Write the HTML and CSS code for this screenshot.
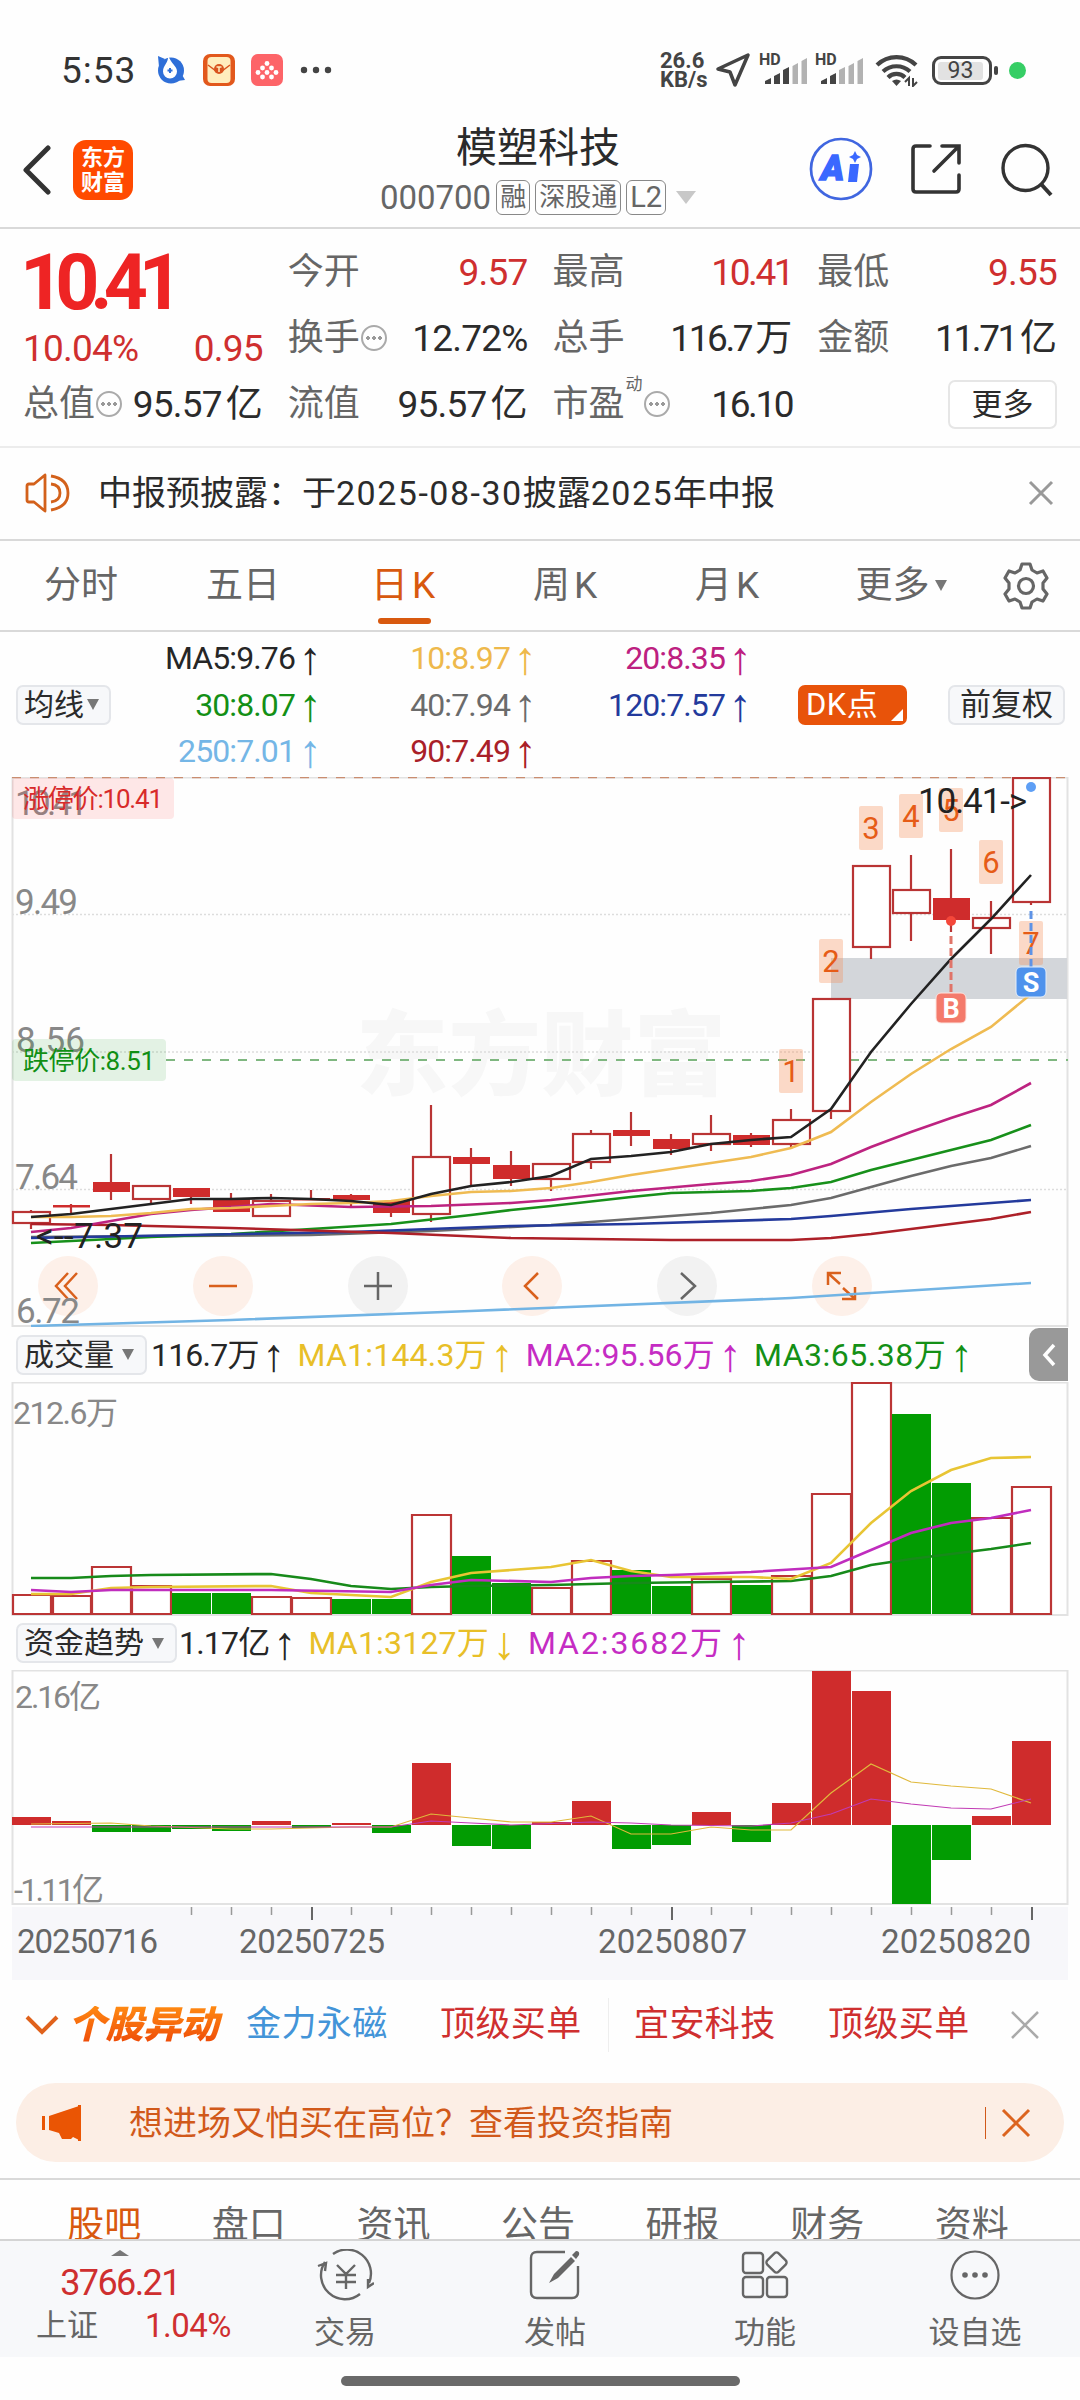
FILE: index.html
```html
<!DOCTYPE html>
<html lang="zh-CN">
<head>
    <meta charset="UTF-8">
    <meta name="viewport" content="width=device-width, initial-scale=1.0">
    <title>模塑科技 000700</title>
    <link rel="stylesheet" href="styles.css">
</head>
<body>
    <div class="status-bar">
        <div class="status-left">
            <span class="clock">5:53</span>
            <svg class="app-drop" width="30" height="30" viewBox="0 0 30 30"><circle cx="15" cy="15.500" r="13" fill="#2f6fd8"/><path d="M2 1 9 4 3 12Z" fill="#2f6fd8"/><path d="M25 18 29 25 21 26Z" fill="#2f6fd8"/><path d="M12 0C13 8 7 10 7 16.500a7 7 0 0 0 14 0C21 11 15 9 12 0Z" fill="#fff"/><path d="M14 13v5M11.500 15.500h5" stroke="#2f6fd8" stroke-width="2"/></svg>
            <svg class="app-mail" width="32" height="32" viewBox="0 0 32 32"><rect width="32" height="32" rx="7" fill="#e2581c"/><rect x="4.500" y="3" width="23" height="26" rx="4" fill="#ffedbd"/><path d="M5 11l8 6h6l8-6" fill="none" stroke="#d9541e" stroke-width="1.500"/><circle cx="16" cy="15" r="5" fill="#d9541e"/><path d="M13.500 13h5M16 13v5" stroke="#ffedbd" stroke-width="1.500"/></svg>
            <svg class="app-dots" width="32" height="32" viewBox="0 0 32 32"><rect width="32" height="32" rx="7" fill="#fd6468"/><g fill="#fff"><circle cx="16" cy="9.500" r="2.400"/><circle cx="11.500" cy="14" r="2.400"/><circle cx="20.500" cy="14" r="2.400"/><circle cx="7" cy="18.500" r="2.400"/><circle cx="16" cy="18.500" r="2.400"/><circle cx="25" cy="18.500" r="2.400"/><circle cx="11.500" cy="23" r="2.400"/><circle cx="20.500" cy="23" r="2.400"/></g></svg>
            <svg width="32" height="8" viewBox="0 0 32 8" fill="#444"><circle cx="4" cy="4" r="3.200"/><circle cx="16" cy="4" r="3.200"/><circle cx="28" cy="4" r="3.200"/></svg>
        </div>
        <div class="status-right">
            <div class="net-speed"><span>26.6</span><span>KB/s</span></div>
            <svg class="nav-arrow" width="36" height="36" viewBox="0 0 36 36"><path d="M33 3 20 33 15 20 3 17Z" fill="none" stroke="#444" stroke-width="3.500" stroke-linejoin="round"/></svg>
            <div class="signal"><span>HD</span><svg width="42" height="28" viewBox="0 0 42 28"><path d="M0 27v-3l6-3v6zM9 27v-8l6-3v11zM18 27V13l6-3v17z" fill="#444"/><path d="M27.500 27V9l5.500-3v21zM36.500 27V4l5.500-3v26z" fill="#b2b2b2"/></svg></div>
            <div class="signal"><span>HD</span><svg width="42" height="28" viewBox="0 0 42 28"><path d="M0 27v-3l6-3v6zM9 27v-8l6-3v11z" fill="#444"/><path d="M18 27V13l6-3v17zM27.500 27V9l5.500-3v21zM36.500 27V4l5.500-3v26z" fill="#b2b2b2"/></svg></div>
            <svg class="wifi" width="44" height="34" viewBox="0 0 44 34"><path d="M2 12a28 28 0 0 1 39 0M8 18.500a20 20 0 0 1 27 0M13 24.500a12 12 0 0 1 17 0" fill="none" stroke="#444" stroke-width="4.200"/><path d="M17 28q4.500-3 9 0l-4.500 5z" fill="#444"/><path d="M34 33v-8l-4 4M38 25v8l4-4" fill="none" stroke="#444" stroke-width="2"/></svg>
            <div class="battery"><span>93</span></div>
            <i class="privacy-dot"></i>
        </div>
    </div>

    <header class="top-bar">
        <svg class="back" width="28" height="50" viewBox="0 0 28 50"><path d="M25 3 3 25l22 22" fill="none" stroke="#333" stroke-width="5" stroke-linecap="round" stroke-linejoin="round"/></svg>
        <div class="brand"><span>东方</span><span>财富</span></div>
        <div class="stock-title">
            <h1>模塑科技</h1>
            <div class="stock-sub"><span class="code">000700</span><b>融</b><b>深股通</b><b class="l2">L2</b><i></i></div>
        </div>
        <svg class="ai" width="64" height="64" viewBox="0 0 64 64"><circle cx="32" cy="32" r="30" fill="none" stroke="#4066e0" stroke-width="2.700"/><text x="12" y="43" class="ai-a">A</text><path d="M41 27h9l-2 18h-9z" fill="#3a68ff"/><path d="M46 14l2 4 4 2-4 2-2 4-2-4-4-2 4-2z" fill="#3a68ff"/></svg>
        <svg class="share" width="52" height="52" viewBox="0 0 52 52"><path d="M20 3H6q-3 0-3 3v40q0 3 3 3h40q3 0 3-3V32M32 3h17v17M48 4 24 28" fill="none" stroke="#333" stroke-width="3.600" stroke-linecap="round"/></svg>
        <svg class="search" width="54" height="54" viewBox="0 0 54 54"><circle cx="25.500" cy="25" r="22.500" fill="none" stroke="#333" stroke-width="3.400"/><path d="M41 41l10 11" stroke="#333" stroke-width="4"/></svg>
    </header>

    <section class="quote">
        <div class="price-box">
            <div class="price">10.41</div>
            <div class="change"><span>10.04%</span><span>0.95</span></div>
        </div>
        <div class="cell"><label>今开</label><span class="up">9.57</span></div>
        <div class="cell"><label>最高</label><span class="up tight">10.41</span></div>
        <div class="cell"><label>最低</label><span class="up">9.55</span></div>
        <div class="cell"><label>换手</label><i class="info"></i><span>12.72%</span></div>
        <div class="cell"><label>总手</label><span class="tight">116.7<em>万</em></span></div>
        <div class="cell"><label>金额</label><span class="tight">11.71<em>亿</em></span></div>
        <div class="cell"><label>总值</label><i class="info"></i><span>95.57<em>亿</em></span></div>
        <div class="cell"><label>流值</label><span>95.57<em>亿</em></span></div>
        <div class="cell"><label>市盈<sup>动</sup></label><i class="info"></i><span class="tight">16.10</span></div>
        <div class="cell end"><button class="more">更多</button></div>
    </section>

    <section class="notice">
        <svg width="46" height="40" viewBox="0 0 46 40" fill="none" stroke="#d3611b" stroke-width="2.800"><path d="M20 2 9 11H4q-2 0-2 2v14q0 2 2 2h5l11 9zM26 3q17 3 17 17T26 37M26 11q9 1 9 9t-9 9" stroke-linejoin="round"/></svg>
        <p>中报预披露：于<span>2025-08-30</span>披露<span>2025</span>年中报</p>
        <svg class="x" width="26" height="26" viewBox="0 0 26 26"><path d="M2 2l22 22M24 2 2 24" stroke="#999" stroke-width="3"/></svg>
    </section>

    <nav class="period-tabs">
        <span>分时</span><span>五日</span><span class="active k">日K</span><span class="k">周K</span><span class="k">月K</span>
        <span class="tab-more">更多<i class="caret"></i></span>
        <svg class="gear" width="48" height="48" viewBox="0 0 48 48" fill="none" stroke="#666" stroke-width="3.200" stroke-linejoin="round"><path d="M20 2h8l2 6 5 3 6-2 4 7-4 5v6l4 5-4 7-6-2-5 3-2 6h-8l-2-6-5-3-6 2-4-7 4-5v-6l-4-5 4-7 6 2 5-3z"/><circle cx="24" cy="24" r="7.500"/></svg>
    </nav>

    <section class="ma-bar">
        <button class="chip">均线<i class="caret"></i></button>
        <div class="ma-grid">
            <span class="c-black">MA5:9.76<u>↑</u></span><span class="c-gold">10:8.97<u>↑</u></span><span class="c-plum">20:8.35<u>↑</u></span>
            <span class="c-green">30:8.07<u>↑</u></span><span class="c-gray">40:7.94<u>↑</u></span><span class="c-blue">120:7.57<u>↑</u></span>
            <span class="c-sky">250:7.01<u>↑</u></span><span class="c-wine">90:7.49<u>↑</u></span>
        </div>
        <button class="chip dk">DK点<i></i></button>
        <button class="chip adj">前复权</button>
    </section>

    <svg class="chart" width="1080" height="550" viewBox="0 777 1080 550">
        <text x="356" y="1088" class="watermark" textLength="370">东方财富</text>
        <g class="grid"><path d="M12 914.500H1068M12 1052H1068M12 1189.500H1068"/></g>
        <path class="frame" d="M12.500 777.500H1067.500V1326H12.500Z"/>
        <path d="M12 777.500H1068" stroke="#c98d70" stroke-width="1.500" stroke-dasharray="9 9"/>
        <rect x="831" y="958" width="236" height="41" fill="#d3d6da"/>
        <path d="M166 1060H1068" stroke="#7fb780" stroke-width="2" stroke-dasharray="9 9"/>

        <!-- price scale -->
        <g class="scale">
            <text x="15" y="815" textLength="73">10.41</text>
            <text x="15" y="914" textLength="63">9.49</text>
            <text x="16" y="1052" textLength="69">8.56</text>
            <text x="15" y="1189" textLength="63">7.64</text>
        </g>

        <!-- round tool buttons -->
        <g fill="#fdf0e9"><circle cx="68" cy="1286" r="30"/><circle cx="223" cy="1286" r="30"/><circle cx="532" cy="1286" r="30"/><circle cx="842" cy="1286" r="30"/></g>
        <g fill="#f2f2f2"><circle cx="378" cy="1286" r="30"/><circle cx="687" cy="1286" r="30"/></g>
        <g fill="none" stroke="#d9601c" stroke-width="2.500">
            <path d="M68 1273l-12 13 12 13M77 1273l-12 13 12 13M209 1286h28M538 1273l-13 13 13 13"/>
            <path d="M828 1285v-12h13M829 1274l11 10M855 1287v12h-13M854 1298l-11-10"/>
        </g>
        <path d="M364 1286h28M378 1272v28M681 1273l14 13-14 13" fill="none" stroke="#666" stroke-width="2.500"/>
        <g class="scale"><text x="16" y="1323" textLength="64">6.72</text></g>

        <!-- candles -->
        <g class="wick">
            <path d="M31 1210v2M31 1223v6M71 1204v9M111 1154v46M151 1199v4M191 1188v16M231 1193v10M271 1194v7M311 1190v9M351 1194v12M391 1200v17M431 1105v52M431 1214v8M471 1148v37M511 1151v35M551 1179v12M591 1130v4M591 1162v7M631 1112v34M671 1134v21M711 1115v19M711 1144v7M751 1133v14M791 1109v10M791 1144v5M831 1111v8M871 947v12M911 855v35M911 913v28M951 849v83M991 901v17M991 928v26M1031 902v3"/>
        </g>
        <g class="up-body">
            <rect x="13" y="1212" width="37" height="11"/><rect x="133" y="1186" width="37" height="13"/><rect x="253" y="1201" width="37" height="15"/><rect x="413" y="1157" width="37" height="57"/><rect x="533" y="1164" width="37" height="15"/><rect x="573" y="1134" width="37" height="28"/><rect x="693" y="1134" width="37" height="10"/><rect x="773" y="1120" width="37" height="24"/><rect x="813" y="999" width="37" height="112"/><rect x="853" y="866" width="37" height="81"/><rect x="893" y="890" width="37" height="23"/><rect x="973" y="918" width="37" height="10"/><rect x="1013" y="778" width="37" height="124"/>
        </g>
        <g class="down-body">
            <rect x="53" y="1205" width="37" height="2.500"/><rect x="93" y="1182" width="37" height="10"/><rect x="173" y="1188" width="37" height="9"/><rect x="213" y="1198" width="37" height="14"/><rect x="293" y="1198" width="37" height="2.500"/><rect x="333" y="1195" width="37" height="5"/><rect x="373" y="1201" width="37" height="12"/><rect x="453" y="1157" width="37" height="7"/><rect x="493" y="1165" width="37" height="14"/><rect x="613" y="1130" width="37" height="6"/><rect x="653" y="1139" width="37" height="10"/><rect x="733" y="1135" width="37" height="10"/><rect x="933" y="898" width="37" height="22"/>
        </g>

        <!-- moving averages -->
        <g class="lines">
            <polyline stroke="#6b6b6b" points="31,1237 311,1235 431,1231 551,1225 631,1219 711,1213 791,1205 831,1198 871,1187 911,1176 951,1166 991,1158 1031,1146"/>
            <polyline stroke="#17901a" points="31,1243 151,1237 231,1234 311,1229 391,1224 471,1215 511,1210 551,1206 631,1197 671,1193 751,1191 791,1188 831,1182 871,1170 911,1160 951,1150 991,1140 1031,1125"/>
            <polyline stroke="#243a9c" points="31,1238 191,1235 351,1232 511,1226 631,1224 791,1219 831,1216 911,1209 1031,1200"/>
            <polyline stroke="#ad2028" points="31,1224 111,1225 231,1228 391,1233 511,1238 671,1240 791,1240 831,1238 871,1234 911,1229 991,1219 1031,1212"/>
            <polyline stroke="#72b4e4" points="31,1326 231,1320 471,1311 791,1298 1031,1283"/>
            <polyline stroke="#bd2380" points="31,1232 71,1228 151,1214 191,1210 271,1204 351,1207 431,1206 511,1203 551,1200 631,1191 711,1184 751,1181 791,1175 831,1164 871,1147 911,1132 951,1118 991,1105 1031,1083"/>
            <polyline stroke="#efbb52" points="31,1217 71,1217 111,1216 151,1213 191,1209 231,1208 271,1206 311,1204 351,1203 391,1201 431,1196 471,1192 511,1191 551,1188 591,1182 631,1175 671,1169 711,1163 751,1157 791,1148 831,1132 871,1102 911,1074 951,1049 991,1027 1031,994"/>
            <polyline stroke="#222" points="31,1217 71,1214 111,1209 151,1204 191,1199 231,1199 271,1198 311,1199 351,1201 391,1205 431,1194 471,1186 511,1182 551,1176 591,1159 631,1156 671,1152 711,1144 751,1140 791,1137 831,1109 871,1052 911,1004 951,959 991,919 1031,875"/>
        </g>

        <!-- nine-turn counters -->
        <g fill="#f58b53" fill-opacity=".32"><rect x="779" y="1049" width="24" height="44" rx="2"/><rect x="819" y="939" width="24" height="44" rx="2"/><rect x="859" y="806" width="24" height="44" rx="2"/><rect x="899" y="794" width="24" height="44" rx="2"/><rect x="939" y="788" width="24" height="44" rx="2"/><rect x="979" y="840" width="24" height="44" rx="2"/><rect x="1019" y="921" width="24" height="44" rx="2"/></g>
        <g class="counter"><text x="791" y="1082">1</text><text x="831" y="972">2</text><text x="871" y="839">3</text><text x="911" y="827">4</text><text x="951" y="821">5</text><text x="991" y="873">6</text><text x="1031" y="954">7</text></g>

        <!-- trade marks -->
        <circle cx="951" cy="921" r="5" fill="#f4473a"/>
        <path d="M951 936v58" stroke="#e07468" stroke-width="3" stroke-dasharray="8 4"/>
        <path d="M1031 911v57" stroke="#5e93e6" stroke-width="3" stroke-dasharray="8 4"/>
        <circle cx="1031" cy="787" r="5" fill="#5e9ff5"/>
        <rect x="936" y="993" width="30" height="30" rx="5" fill="#f47a6b" stroke="#fde3de"/>
        <rect x="1016" y="967" width="30" height="30" rx="5" fill="#4e92ec" stroke="#e3eefc"/>
        <g class="mark"><text x="951" y="1018">B</text><text x="1031" y="992">S</text></g>
        <text x="918" y="813" class="peak" textLength="109">10.41-&gt;</text>
        <text x="36" y="1248" class="peak" textLength="107">&lt;--7.37</text>

        <rect x="12" y="778" width="162" height="41" rx="4" fill="#ff4d4d" fill-opacity=".13"/>
        <text x="23" y="808" class="limit" fill="#d82a2a" textLength="140">涨停价:10.41</text>
        <rect x="12" y="1039" width="154" height="42" rx="4" fill="#1d9c2a" fill-opacity=".12"/>
        <text x="23" y="1070" class="limit" fill="#108f14" textLength="132">跌停价:8.51</text>
    </svg>

    <div class="ind-bar volume-bar">
        <button class="chip">成交量<i class="caret"></i></button>
        <span class="c-black">116.7万<u>↑</u></span><span class="c-yellow">MA1:144.3万<u>↑</u></span><span class="c-magenta">MA2:95.56万<u>↑</u></span><span class="c-green">MA3:65.38万<u>↑</u></span>
        <div class="drawer"><svg width="14" height="24" viewBox="0 0 14 24"><path d="M12 2 3 12l9 10" fill="none" stroke="#fff" stroke-width="3.500"/></svg></div>
    </div>
    <svg class="chart" width="1080" height="234" viewBox="0 1382 1080 234">
        <path class="frame" d="M12.500 1382.500H1067.500V1615H12.500Z"/>
        <g class="up-vol">
            <path d="M13 1595h38v19h-38zM53 1596h38v18h-38zM92 1567h39v47h-39zM132 1586h39v28h-39zM252 1597h39v17h-39zM292 1598h39v16h-39zM412 1515h39v99h-39zM532 1588h39v26h-39zM572 1561h39v53h-39zM692 1579h39v35h-39zM772 1576h39v38h-39zM812 1494h39v120h-39zM852 1383h39v231h-39zM972 1518h39v96h-39zM1012 1487h39v127h-39z"/>
        </g>
        <g class="down-vol">
            <path d="M172 1593h39v21h-39zM212 1593h39v21h-39zM332 1599h39v15h-39zM372 1599h39v15h-39zM452 1556h39v58h-39zM492 1583h39v31h-39zM612 1570h39v44h-39zM652 1586h39v28h-39zM732 1585h39v29h-39zM892 1414h39v200h-39zM932 1483h39v131h-39z"/>
        </g>
        <g class="lines">
            <polyline stroke="#178a1a" points="31,1578 71,1578 111,1576 151,1575 271,1574 311,1579 351,1586 391,1589 431,1587 471,1586 551,1585 631,1583 711,1582 791,1581 831,1576 871,1565 911,1559 951,1554 991,1549 1031,1543"/>
            <polyline stroke="#e8c534" points="31,1594 71,1594 111,1588 151,1587 271,1586 311,1593 351,1595 391,1597 431,1582 471,1573 511,1570 551,1567 591,1560 631,1571 671,1577 751,1577 791,1579 831,1563 871,1523 911,1491 951,1470 991,1458 1031,1457"/>
            <polyline stroke="#c02dbe" points="31,1590 71,1592 111,1590 271,1590 391,1592 431,1585 471,1580 551,1582 591,1578 631,1576 671,1575 751,1572 831,1567 871,1550 911,1533 951,1523 991,1518 1031,1510"/>
        </g>
        <text x="13" y="1424" class="axis-text" textLength="105">212.6万</text>
    </svg>

    <div class="ind-bar fund-bar">
        <button class="chip">资金趋势<i class="caret"></i></button>
        <span class="c-black">1.17亿<u>↑</u></span><span class="c-yellow">MA1:3127万<u>↓</u></span><span class="c-magenta">MA2:3682万<u>↑</u></span>
    </div>
    <svg class="chart" width="1080" height="310" viewBox="0 1670 1080 310">
        <rect x="12" y="1907" width="1056" height="73" fill="#f7f7fa"/>
        <path class="frame" d="M12.500 1670.500H1067.500V1904H12.500Z"/>
        <path fill="#cf2c2c" d="M12 1817h39v8h-39zM52 1821h39v4h-39zM252 1821h39v4h-39zM332 1823h39v2h-39zM412 1763h39v62h-39zM532 1822h39v3h-39zM572 1801h39v24h-39zM692 1812h39v13h-39zM772 1803h39v22h-39zM812 1671h39v154h-39zM852 1691h39v134h-39zM972 1816h39v9h-39zM1012 1741h39v84h-39z"/>
        <path fill="#029c02" d="M92 1825h39v7h-39zM132 1825h39v7h-39zM172 1825h39v4h-39zM212 1825h39v6h-39zM292 1825h39v3h-39zM372 1825h39v8h-39zM452 1825h39v21h-39zM492 1825h39v24h-39zM612 1825h39v24h-39zM652 1825h39v20h-39zM732 1825h39v17h-39zM892 1825h39v79h-39zM932 1825h39v35h-39z"/>
        <g class="lines thin">
            <polyline stroke="#e0b93c" points="31,1824 111,1823 151,1826 231,1829 271,1829 351,1827 391,1827 431,1814 471,1818 511,1822 551,1822 591,1816 631,1834 671,1834 711,1827 751,1830 791,1830 831,1793 871,1764 911,1782 951,1786 991,1789 1031,1803"/>
            <polyline stroke="#c13bb4" points="31,1827 391,1827 431,1821 471,1823 511,1825 591,1822 631,1823 671,1825 751,1826 791,1823 831,1814 871,1799 911,1804 951,1808 991,1809 1031,1799"/>
        </g>
        <text x="15" y="1708" class="axis-text" textLength="86">2.16亿</text>
        <text x="14" y="1901" class="axis-text" textLength="90">-1.11亿</text>
        <path stroke="#999" stroke-width="1.500" d="M191.500 1907v8M231.500 1907v8M271.500 1907v8M351.500 1907v8M391.500 1907v8M431.500 1907v8M471.500 1907v8M511.500 1907v8M551.500 1907v8M591.500 1907v8M631.500 1907v8M711.500 1907v8M751.500 1907v8M791.500 1907v8M831.500 1907v8M871.500 1907v8M911.500 1907v8M951.500 1907v8M991.500 1907v8"/>
        <path stroke="#666" stroke-width="2" d="M312 1907v13M672 1907v13M1032 1907v13"/>
        <g class="date"><text x="17" y="1953" textLength="141">20250716</text><text x="239" y="1953" textLength="146">20250725</text><text x="598" y="1953" textLength="149">20250807</text><text x="881" y="1953" textLength="150">20250820</text></g>
    </svg>

    <section class="movers">
        <svg width="34" height="22" viewBox="0 0 34 22"><path d="M2 3l15 15L32 3" fill="none" stroke="#e0621c" stroke-width="4"/></svg>
        <strong>个股异动</strong>
        <span class="m-blue">金力永磁</span><span>顶级买单</span><i class="divider"></i><span>宜安科技</span><span>顶级买单</span>
        <svg class="x" width="30" height="30" viewBox="0 0 30 30"><path d="M2 2l26 26M28 2 2 28" stroke="#aaa" stroke-width="2.500"/></svg>
    </section>

    <section class="promo">
        <svg width="42" height="36" viewBox="0 0 42 36" fill="#ea5504"><path d="M1 11h3v14H1zM8 11 38 1v34l-6-3-2 2h-9l-3-6-10-3z"/><path d="M37 0h3v36h-3z"/></svg>
        <p>想进场又怕买在高位？查看投资指南</p>
        <i></i>
        <svg width="32" height="30" viewBox="0 0 32 30"><path d="M3 2l26 26M29 2 3 28" stroke="#dc641f" stroke-width="3"/></svg>
    </section>

    <nav class="info-tabs">
        <span class="active">股吧</span><span>盘口</span><span>资讯</span><span>公告</span><span>研报</span><span>财务</span><span>资料</span>
    </nav>

    <footer class="bottom-nav">
        <div class="index">
            <i></i>
            <b>3766.21</b>
            <div><span>上证</span><em>1.04%</em></div>
        </div>
        <div class="item">
            <svg width="58" height="52" viewBox="0 0 58 52" fill="none" stroke="#666" stroke-width="2.400"><path d="M17 5A24 24 0 0 1 53 34M44 45A24 24 0 0 1 9 13M2 17l8-3-1 8M52 30v8l6-4M21 16l9 9 9-9M30 25v15M20 26h20M20 33h20"/></svg>
            <span>交易</span>
        </div>
        <div class="item">
            <svg width="52" height="52" viewBox="0 0 52 52" fill="none" stroke="#666" stroke-width="2.400"><path d="M36 3H8q-6 0-6 6v34q0 6 6 6h35q6 0 6-6V17"/><path d="M20 34l5-9 17-17 4 4-17 17zM43 6l4-4q4 0 3 4l-3 4z" fill="#666" stroke="none"/></svg>
            <span>发帖</span>
        </div>
        <div class="item">
            <svg width="48" height="52" viewBox="0 0 48 52" fill="none" stroke="#666" stroke-width="2.400"><rect x="2" y="4" width="20" height="20" rx="3"/><rect x="2" y="28" width="20" height="20" rx="3"/><rect x="26" y="28" width="20" height="20" rx="3"/><rect x="27.500" y="5.500" width="16" height="16" rx="3" transform="rotate(45 35.500 13.500)"/></svg>
            <span>功能</span>
        </div>
        <div class="item">
            <svg width="52" height="52" viewBox="0 0 52 52"><circle cx="26" cy="26" r="23.500" fill="none" stroke="#666" stroke-width="2.200"/><g fill="#666"><circle cx="16" cy="26" r="2.800"/><circle cx="26" cy="26" r="2.800"/><circle cx="36" cy="26" r="2.800"/></g></svg>
            <span>设自选</span>
        </div>
    </footer>
    <div class="home-bar"></div>
</body>
</html>
```
FILE: styles.css
```css
:root {
    --red: #cf2f2f;
    --orange: #d8590f;
    --text: #2b2b2b;
    --muted: #666;
    --line: #d9d9d9;
    --chip-bg: #f7f8fa;
}
* {
    box-sizing: border-box;
}
body {
    margin: 0;
    width: 1080px;
    height: 2400px;
    overflow: hidden;
    background: #fefefe;
    color: var(--text);
    font-family: Roboto, "Noto Sans CJK SC", sans-serif;
    font-size: 32px;
    line-height: 1;
}
svg {
    display: block;
    flex: none;
}
i, em, u {
    font-style: normal;
    text-decoration: none;
}
p, h1 {
    margin: 0;
}
button {
    font: inherit;
    color: inherit;
}
span, b, label, button {
    white-space: nowrap;
}

/* status bar */
.status-bar {
    display: flex;
    justify-content: space-between;
    height: 112px;
    padding: 28px 54px 0 61px;
}
.status-left, .status-right {
    display: flex;
    align-items: center;
    height: 84px;
}
.clock {
    font-size: 37px;
    font-weight: 400;
    letter-spacing: 1px;
    color: #333;
    width: 95px;
}
.app-drop {
    margin-right: 17px;
}
.app-mail {
    margin-right: 16px;
}
.app-dots {
    margin-right: 17px;
}
.net-speed {
    display: flex;
    flex-direction: column;
    width: 55px;
    font-size: 22px;
    line-height: 19px;
    font-weight: 700;
    color: #444;
}
.nav-arrow {
    margin-right: 9px;
}
.signal {
    position: relative;
    width: 47px;
    height: 30px;
    margin-right: 9px;
    padding: 2px 0 0 5px;
}
.signal span {
    position: absolute;
    left: -1px;
    top: -3px;
    font-size: 16px;
    font-weight: 700;
    color: #444;
}
.wifi {
    margin: 0 13px 0 3px;
}
.battery {
    position: relative;
    width: 60px;
    height: 29px;
    margin-right: 17px;
    padding: 3px 6px 3px 3px;
    border: 3px solid #444;
    border-radius: 9px;
    color: #444;
    font-size: 23px;
    line-height: 18px;
    text-align: center;
}
.battery span {
    display: block;
    width: 45px;
    background: #e2e2e2;
    border-radius: 3px;
}
.battery::after {
    content: "";
    position: absolute;
    right: -9px;
    top: 7px;
    width: 4px;
    height: 9px;
    border-radius: 2px;
    background: #444;
}
.privacy-dot {
    width: 17px;
    height: 17px;
    border-radius: 50%;
    background: #36ce65;
}

/* header */
.top-bar {
    display: flex;
    align-items: center;
    height: 117px;
    padding: 0 26px 0 23px;
    border-bottom: 2px solid var(--line);
}
.brand {
    display: flex;
    flex-direction: column;
    align-items: center;
    justify-content: center;
    width: 60px;
    height: 60px;
    margin-left: 22px;
    border-radius: 13px;
    background: #ff4a00;
    color: #fff;
    font-size: 22px;
    font-weight: 700;
    line-height: 25px;
}
.stock-title {
    flex: 1;
    padding-left: 134px;
    display: flex;
    flex-direction: column;
    align-items: center;
}
.stock-title h1 {
    font-size: 41px;
    font-weight: 400;
    line-height: 50px;
    padding-left: 0;
}
.stock-sub {
    display: flex;
    align-items: center;
    height: 38px;
    margin-top: 6px;
    gap: 5px;
    color: var(--muted);
}
.stock-sub .code {
    font-size: 33px;
}
.stock-sub b {
    height: 35px;
    padding: 0 3px;
    border: 1.5px solid #888;
    border-radius: 6px;
    font-size: 26px;
    font-weight: 400;
    line-height: 32px;
}
.stock-sub .l2 {
    font-size: 29px;
}
.stock-sub i {
    margin-left: 5px;
    border: 10px solid transparent;
    border-top: 13px solid #c8c8c8;
    border-bottom: 0;
}
.ai-a {
    font: italic 900 35px Roboto, sans-serif;
    fill: #3a68ff;
    stroke: #3a68ff;
    stroke-width: 1.5px;
}
.ai, .share {
    margin-bottom: 2px;
}
.share {
    margin-left: 37px;
}
.search {
    margin-left: 38px;
}

/* quote */
.quote {
    display: grid;
    grid-template-columns: repeat(4, 1fr);
    grid-auto-rows: 66px;
    column-gap: 25px;
    height: 219px;
    padding: 10px 23px 0 23px;
    border-bottom: 2px solid #ececec;
    font-size: 37px;
}
.price-box {
    grid-row: span 2;
}
.price {
    height: 88px;
    margin-left: -3px;
    color: #ee2424;
    font-size: 77px;
    font-weight: 700;
    line-height: 88px;
    letter-spacing: -9px;
}
.change {
    display: flex;
    justify-content: space-between;
    color: var(--red);
    line-height: 44px;
    letter-spacing: -0.8px;
}
.cell {
    display: flex;
    align-items: center;
}
.cell label {
    position: relative;
    color: var(--muted);
    font-size: 36px;
}
.cell sup {
    position: absolute;
    left: 73px;
    top: -10px;
    font-size: 17px;
    line-height: 17px;
}
.cell label:has(sup) {
    margin-right: 18px;
}
.cell > span {
    margin-left: auto;
    letter-spacing: -0.8px;
}
.cell > .tight {
    letter-spacing: -2.4px;
}
.cell em {
    letter-spacing: 0;
    margin-left: 4px;
}
.cell .up {
    color: var(--red);
}
.info {
    width: 26px;
    height: 26px;
    margin-left: 1px;
    border: 2px solid #aaa;
    border-radius: 50%;
    background: radial-gradient(circle, #999 1.6px, transparent 2px) center / 6px 6px no-repeat,
        radial-gradient(circle, #999 1.6px, transparent 2px) 2px 8px / 6px 6px no-repeat,
        radial-gradient(circle, #999 1.6px, transparent 2px) 14px 8px / 6px 6px no-repeat;
}
.end {
    justify-content: flex-end;
}
.more {
    width: 109px;
    height: 49px;
    padding: 0;
    border: 2px solid #e6e6e6;
    border-radius: 7px;
    background: #fff;
    font-size: 31px;
}

/* notice */
.notice {
    display: flex;
    align-items: center;
    height: 93px;
    padding: 0 26px 2px 25px;
    border-bottom: 2px solid var(--line);
}
.notice p {
    flex: 1;
    margin-left: 27px;
    font-size: 34px;
}
.notice p span {
    letter-spacing: 1.5px;
}

/* period tabs */
.period-tabs {
    display: flex;
    align-items: center;
    height: 91px;
    border-bottom: 2px solid var(--line);
    color: var(--muted);
    font-size: 37px;
}
.period-tabs span {
    display: flex;
    align-items: center;
    justify-content: center;
    width: 162px;
    height: 89px;
}
.period-tabs .k {
    letter-spacing: 4px;
}
.period-tabs .active {
    position: relative;
    color: var(--orange);
}
.period-tabs .active::after {
    content: "";
    position: absolute;
    left: 54px;
    bottom: 6px;
    width: 53px;
    height: 6px;
    border-radius: 3px;
    background: var(--orange);
}
.period-tabs .tab-more {
    width: 182px;
}
.gear {
    margin-left: 10px;
}
.caret {
    display: inline-block;
    margin-left: 8px;
    border: 6px solid transparent;
    border-top: 11px solid #777;
    border-bottom: 0;
}
.tab-more .caret {
    margin-left: 5px;
}

/* indicator headers */
.chip {
    display: flex;
    align-items: center;
    height: 40px;
    padding: 0 6px;
    border: 2px solid #e4e6ea;
    border-radius: 7px;
    background: var(--chip-bg);
    font-size: 30px;
    line-height: 36px;
}
.ma-bar {
    display: flex;
    align-items: center;
    height: 145px;
    padding-left: 16px;
}
.ma-bar .chip {
    width: 95px;
}
.ma-bar .chip .caret {
    margin-left: 3px;
}
.ma-grid {
    display: grid;
    grid-template-columns: 208px 215px 215px;
    grid-auto-rows: 46.5px;
    width: 638px;
    letter-spacing: -0.9px;
}
.ma-grid span, .ind-bar span {
    display: flex;
    align-items: center;
    justify-content: flex-end;
}
u {
    display: flex;
    justify-content: center;
    width: 18px;
    margin-left: 6px;
    font-family: "Liberation Sans", sans-serif;
    font-size: 46px;
    line-height: 40px;
    letter-spacing: 0;
}
.ma-bar .dk {
    position: relative;
    width: 109px;
    margin-left: 49px;
    border-color: #e8530a;
    background: #e8530a;
    color: #fff;
    font-size: 31px;
    letter-spacing: 0.5px;
}
.dk i {
    position: absolute;
    right: 2px;
    bottom: 2px;
    border-left: 12px solid transparent;
    border-bottom: 12px solid #fff;
}
.ma-bar .adj {
    width: 117px;
    margin-left: 41px;
    justify-content: center;
    font-size: 31px;
}
.c-black { color: #262626; }
.c-gold { color: #eeb94c; }
.c-plum { color: #bd2080; }
.c-green { color: #149016; }
.c-gray { color: #6b6b6b; }
.c-blue { color: #233a9c; }
.c-sky { color: #74b6e6; }
.c-wine { color: #a92028; }
.c-yellow { color: #e8bf28; }
.c-magenta { color: #c52cc3; }
.ind-bar {
    display: flex;
    align-items: center;
    height: 55px;
    padding-left: 16px;
}
.ind-bar .chip {
    width: 131px;
    margin-right: 4px;
}
.ind-bar span {
    margin-right: 15px;
    letter-spacing: 0.2px;
}
.ind-bar .c-black {
    letter-spacing: -0.8px;
}
.ind-bar .c-green {
    letter-spacing: 0.5px;
}
.fund-bar {
    height: 54px;
}
.fund-bar .c-magenta {
    letter-spacing: 1.9px;
}
.fund-bar .chip {
    width: 161px;
    margin-right: 2px;
}
.drawer {
    display: flex;
    align-items: center;
    justify-content: center;
    width: 39px;
    height: 53px;
    margin: 0 12px 0 auto;
    border-radius: 10px 0 0 10px;
    background: #999;
}

/* charts */
.chart text {
    font-family: Roboto, "Noto Sans CJK SC", sans-serif;
}
.chart .watermark {
    font-size: 92px;
    font-weight: 900;
    fill: #f7f7f7;
}
.frame {
    fill: none;
    stroke: #e2e2e2;
    stroke-width: 2;
}
.grid {
    stroke: #ddd;
    stroke-width: 1.5;
    stroke-dasharray: 2 2;
}
.scale {
    font-size: 35px;
    fill: #888;
}
.wick {
    stroke: #b93434;
    stroke-width: 2.2;
}
.up-body {
    fill: #fff;
    stroke: #b93434;
    stroke-width: 2.2;
}
.down-body {
    fill: #cf2c2c;
}
.up-vol {
    fill: #fff;
    stroke: #bb3535;
    stroke-width: 2.2;
}
.down-vol {
    fill: #029c02;
}
.lines {
    fill: none;
    stroke-width: 2.6;
}
.thin {
    stroke-width: 1.2;
}
.counter {
    font-size: 31px;
    fill: #e65c17;
    text-anchor: middle;
}
.mark {
    font-size: 27px;
    font-weight: 700;
    fill: #fff;
    text-anchor: middle;
}
.peak {
    font-size: 35px;
    fill: #222;
}
.limit {
    font-size: 26px;
}
.axis-text {
    font-size: 32px;
    fill: #888;
}
.date {
    font-size: 33px;
    fill: var(--muted);
}

/* movers */
.movers {
    display: flex;
    align-items: center;
    height: 103px;
    padding: 0 40px 14px 25px;
    font-size: 35px;
    color: var(--red);
}
.movers strong {
    width: 177px;
    padding-left: 9px;
    font-size: 38px;
    font-weight: 900;
    font-style: italic;
    letter-spacing: -0.5px;
    color: transparent;
    background: linear-gradient(#ff8a12, #ee4a08);
    background-clip: text;
    -webkit-background-clip: text;
}
.movers span {
    width: 141px;
    margin-left: 53px;
    letter-spacing: 0.4px;
}
.movers strong + span {
    margin-left: 10px;
}
.m-blue {
    color: #4394d8;
}
.divider {
    width: 1px;
    height: 54px;
    margin: 0 -28px 0 27px;
    background: #eee;
}
.movers .x {
    margin-left: auto;
}

/* promo */
.promo {
    display: flex;
    align-items: center;
    height: 79px;
    margin: 0 16px;
    padding: 0 32px 0 25px;
    border-radius: 40px;
    background: #fceee5;
    color: #d1591a;
}
.promo p {
    flex: 1;
    margin-left: 46px;
    font-size: 34px;
}
.promo i {
    width: 1px;
    height: 32px;
    margin-right: 14px;
    background: #d1591a;
}

/* info tabs, cut off by the bottom nav */
.info-tabs {
    display: flex;
    height: 61px;
    margin-top: 16px;
    padding: 27px 36px 0 32px;
    border-top: 2px solid var(--line);
    overflow: hidden;
    color: var(--muted);
    font-size: 37px;
}
.info-tabs span {
    flex: 1;
    text-align: center;
}
.info-tabs .active {
    color: var(--orange);
}

/* bottom nav */
.bottom-nav {
    display: flex;
    height: 118px;
    border-top: 2px solid #d4d4d4;
    background: #f7f8fa;
    color: var(--muted);
}
.index {
    display: flex;
    flex-direction: column;
    align-items: center;
    width: 240px;
    padding-top: 9px;
}
.index > i {
    border: 9px solid transparent;
    border-bottom: 6px solid #777;
    border-top: 0;
}
.index b {
    margin-top: 9px;
    color: var(--red);
    font-size: 36px;
    font-weight: 400;
    letter-spacing: -1.6px;
}
.index div {
    display: flex;
    align-items: center;
    align-self: stretch;
    margin-top: 8px;
    padding-left: 36px;
    font-size: 31px;
}
.index em {
    margin-left: 47px;
    color: var(--red);
    font-size: 33px;
    letter-spacing: -0.5px;
}
.item {
    display: flex;
    flex-direction: column;
    align-items: center;
    width: 210px;
    padding-top: 8px;
    font-size: 31px;
}
.item span {
    margin-top: 16px;
}
.home-bar {
    width: 399px;
    height: 10px;
    margin: 19px auto 0;
    border-radius: 5px;
    background: #6a6a6a;
}
```
